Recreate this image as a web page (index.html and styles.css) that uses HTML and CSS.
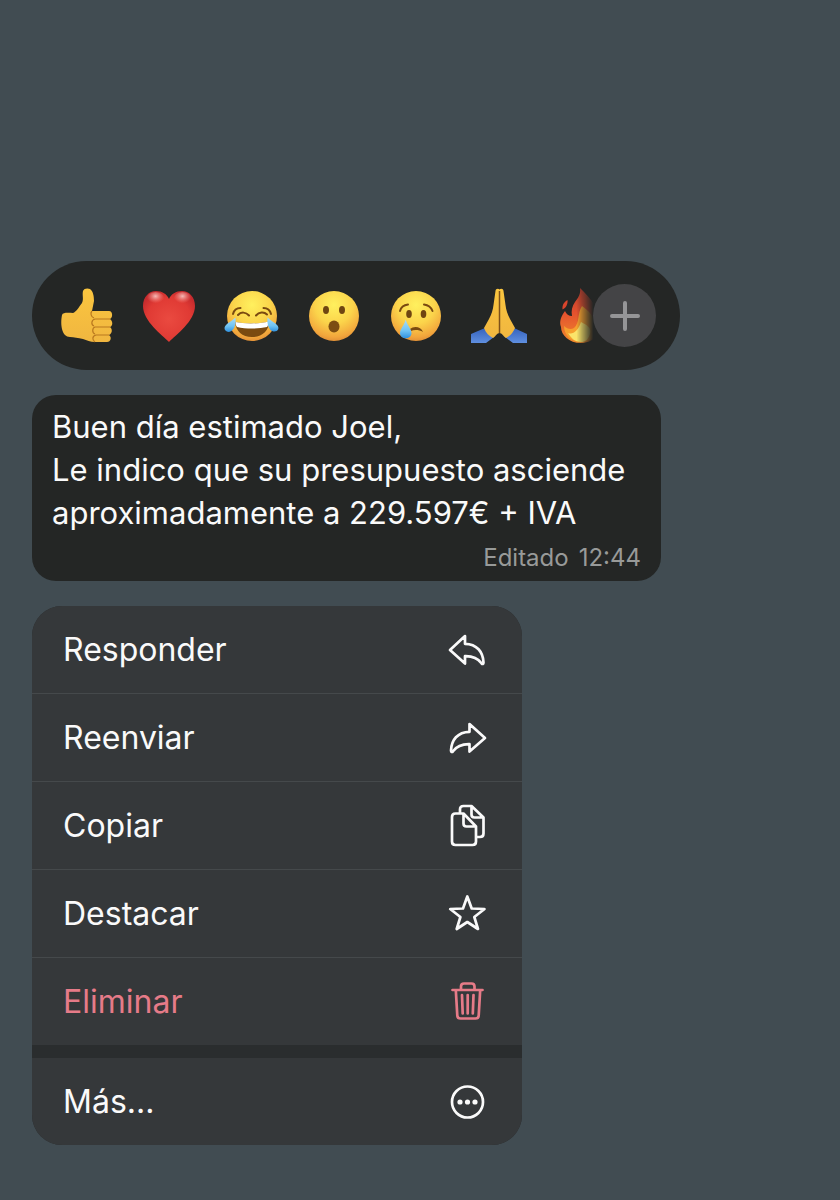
FILE: index.html
```html
<!DOCTYPE html>
<html lang="es">
<head>
    <meta charset="UTF-8">
    <meta name="viewport" content="width=device-width, initial-scale=1.0">
    <title>Mensaje</title>
    <link rel="stylesheet" href="styles.css">
</head>
<body>
    <svg class="defs" aria-hidden="true">
        <defs>
            <radialGradient id="face" cx="50%" cy="28%" r="75%">
                <stop offset="0" stop-color="#fff05e"/>
                <stop offset="0.5" stop-color="#fbd44b"/>
                <stop offset="0.85" stop-color="#f2a63c"/>
                <stop offset="1" stop-color="#dd8a35"/>
            </radialGradient>
            <linearGradient id="skin" x1="0" y1="0" x2="0" y2="1">
                <stop offset="0" stop-color="#fbc63f"/>
                <stop offset="1" stop-color="#f0b640"/>
            </linearGradient>
            <radialGradient id="heart" cx="50%" cy="55%" r="60%">
                <stop offset="0" stop-color="#ea4a40"/>
                <stop offset="0.7" stop-color="#e03a34"/>
                <stop offset="1" stop-color="#c42a2d"/>
            </radialGradient>
            <radialGradient id="shine" cx="50%" cy="30%" r="50%">
                <stop offset="0" stop-color="#ffdcd8" stop-opacity="0.8"/>
                <stop offset="1" stop-color="#ff9a92" stop-opacity="0"/>
            </radialGradient>
            <linearGradient id="tear" x1="0" y1="0" x2="0" y2="1">
                <stop offset="0" stop-color="#a9ddf8"/>
                <stop offset="0.6" stop-color="#6fc3f3"/>
                <stop offset="1" stop-color="#2f90de"/>
            </linearGradient>
            <linearGradient id="cuff" x1="0" y1="0" x2="0" y2="1">
                <stop offset="0" stop-color="#3562bd"/>
                <stop offset="1" stop-color="#5f8fe0"/>
            </linearGradient>
            <linearGradient id="flame" x1="0" y1="0" x2="0" y2="1">
                <stop offset="0" stop-color="#b53b2c"/>
                <stop offset="0.45" stop-color="#e4512e"/>
                <stop offset="1" stop-color="#f08a2c"/>
            </linearGradient>
        </defs>
    </svg>

    <main class="screen">
        <div class="reactions">
            <div class="emojis">
                <button class="emoji" aria-label="Me gusta">
                    <svg viewBox="0 0 56 56">
                        <path fill="url(#skin)" d="M3 27C4 24 10 25 14 25C17 24 20 19 23 15C25 11 23 7 24 3C25 0 29 0 31 1C34 3 35 8 35 13L33 23L50 23C54 23 54 30 51 31C54 33 54 38 51 39C54 41 53 46 50 47C53 49 52 54 48 54L36 54C31 54 28 52 24 51C19 50 15 49 11 49C3 49 1 37 3 27Z"/>
                        <path class="crease" d="M33 23C31 25 32 29 35 30M51 31H36C32 32 32 37 35 38M51 39H36C33 40 33 45 36 46M50 47H37C33 48 33 52 36 54"/>
                    </svg>
                </button>
                <button class="emoji" aria-label="Me encanta">
                    <svg viewBox="0 0 56 56">
                        <path fill="url(#heart)" d="M28 54C21 47 2 33 2 18C2 9 8 3 15 3C21 3 26 6 28 11C30 6 35 3 41 3C48 3 54 9 54 18C54 33 35 47 28 54Z"/>
                        <ellipse cx="14.500" cy="11" rx="9" ry="7" fill="url(#shine)"/>
                        <ellipse cx="41.500" cy="11" rx="9" ry="7" fill="url(#shine)"/>
                    </svg>
                </button>
                <button class="emoji" aria-label="Me divierte">
                    <svg viewBox="0 0 56 56">
                        <circle cx="28" cy="28" r="25" fill="url(#face)"/>
                        <path class="line" d="M9 26C10 22 13 20 16.500 20M39.500 20C43 20 46 22 47 26M14 27C17 23.500 22 24 25 27.500M32 27.500C35 24 40 23.500 43 26.500"/>
                        <path fill="#7a4a10" d="M11 34C20 36 36 36 45 33.500C45 43 38 49 28 49C18 49 12 43 11 34Z"/>
                        <path fill="#fff" d="M11.500 34C20 36 36 36 44.500 33.500C44.500 36 44 38 43 39C34 41 22 41 13 39C12 38 11.500 36 11.500 34Z"/>
                        <path fill="url(#tear)" d="M11.500 29.500C12 35 11 43 5 44C1 44 -1 40 2 37C4 34.500 8 33 11.500 29.500Z"/>
                        <path fill="url(#tear)" d="M43.500 29.500C43 35 44 42 49.500 43.500C54 44 56 40 53 37C51 34.500 47 33 43.500 29.500Z"/>
                    </svg>
                </button>
                <button class="emoji" aria-label="Me asombra">
                    <svg viewBox="0 0 56 56">
                        <circle cx="28" cy="28" r="25" fill="url(#face)"/>
                        <ellipse cx="20" cy="22" rx="3" ry="4" fill="#6f4511"/>
                        <ellipse cx="36" cy="22" rx="3" ry="4" fill="#6f4511"/>
                        <ellipse cx="28" cy="38.500" rx="5.500" ry="6" fill="#7c4d12"/>
                    </svg>
                </button>
                <button class="emoji" aria-label="Me entristece">
                    <svg viewBox="0 0 56 56">
                        <circle cx="28" cy="28" r="25" fill="url(#face)"/>
                        <path class="line" d="M12 23C13 19 16 17 20 16.500M36 16.500C40 17 43 19 44.500 23"/>
                        <ellipse cx="21" cy="26" rx="2.800" ry="4" fill="#6f4511"/>
                        <ellipse cx="35.500" cy="26" rx="2.800" ry="4" fill="#6f4511"/>
                        <path fill="#7a4a10" d="M22 41C26 37.500 33 38.500 35 44C31 41.500 26 41.500 23 43Z"/>
                        <path fill="url(#tear)" d="M17.700 31.500C19 37 23.500 41 23.500 45C23.500 52 12 52 12 45C12 41 16.500 37 17.700 31.500Z"/>
                    </svg>
                </button>
                <button class="emoji" aria-label="Gracias">
                    <svg viewBox="0 0 56 56">
                        <path fill="url(#cuff)" d="M0 46L14 40L23 49L15 55H0ZM56 46L43 40L34 49L42 55H56Z"/>
                        <path fill="url(#skin)" d="M28.500 1.500C27 0 24.500 1 24.500 3L22.500 17C22 22 20.500 26 18 31L13 40C15 45 18 48 22 50C25 48 26 45 28.500 45C31 45 32 48 35 50C39 48 42 45 44 40L39 31C36.500 26 35 22 34.500 17L32.500 3C32.500 1 30 0 28.500 1.500Z"/>
                        <path fill="none" stroke="#7d501a" stroke-width="1.500" d="M28.500 3V45"/>
                    </svg>
                </button>
                <button class="emoji emoji-faded" aria-label="Fuego">
                    <svg viewBox="0 0 56 56">
                        <path fill="#d9452c" d="M14.500 12C15 16 13 20 9.500 21.500C9 17 11 14 14.500 12Z"/>
                        <path fill="url(#flame)" d="M27 0C28 6 25 10 22 14C19 18 18 23 19 28C16 28 13 26 12 23C8 28 6 34 8 39C8 47 16 55 28 55C40 55 48 46 48 36C48 24 38 10 27 0Z"/>
                        <path fill="#f6a02e" d="M11 38C14 41 18 42 21 40C27 35 24 26 29 18C35 22 43 30 43 40C43 49 36 54 28 54C18 54 11 47 11 38Z"/>
                        <path fill="#fbe46a" d="M15 45C20 47 25 43 28 34C34 37 39 40 37 46C35 52 32 54 28 54C22 54 18 50 15 45Z"/>
                    </svg>
                </button>
            </div>
            <button class="add" aria-label="Más reacciones">
                <svg viewBox="0 0 32 32"><path d="M16 3V29M3 16H29"/></svg>
            </button>
        </div>

        <article class="message">
            <p class="text">Buen día estimado Joel,<br>Le indico que su presupuesto asciende aproximadamente a 229.597€ + IVA</p>
            <p class="meta"><span>Editado</span><time>12:44</time></p>
        </article>

        <div class="menu">
            <div class="group">
                <button class="item">
                    Responder
                    <svg class="icon" viewBox="0 -2 40 44"><path d="M18 6L3 20L18 33.500V26.200C26 26 31 28.500 34.500 33.300C35.500 34.500 36.500 34 36.500 32.500C36 22 30 14 18 13.800Z"/></svg>
                </button>
                <button class="item">
                    Reenviar
                    <svg class="icon" viewBox="0 -2 40 44"><path d="M22.500 6L38 20L22.500 33.500V26.200C14.500 26 9.500 28.500 6 33.300C5 34.500 4 34 4 32.500C4.500 22 10.500 14 22.500 13.800Z"/></svg>
                </button>
                <button class="item">
                    Copiar
                    <svg class="icon" viewBox="0 -2 40 44"><path d="M13 7.500V3.500Q13 0 16.500 0H24.500L36.500 11.500V27.500Q36.500 31 33 31H29M24.500 0V8.500Q24.500 11.500 27.500 11.500H36.500M8.500 7.500H16.500L29 20.500V35.500Q29 39 25.500 39H8.500Q5 39 5 35.500V11Q5 7.500 8.500 7.500ZM16.500 7.500V17.500Q16.500 20.500 19.500 20.500H29"/></svg>
                </button>
                <button class="item">
                    Destacar
                    <svg class="icon" viewBox="0 -2 40 44"><path d="M20.300 2.500L24.700 14.500L37.500 15L27.300 23L31 35L20.300 28L9.700 35L13.400 23L3.200 15L16 14.500Z"/></svg>
                </button>
                <button class="item danger">
                    Eliminar
                    <svg class="icon" viewBox="0 -2 40 44"><path d="M5.500 8H35.500M14 8V4.500Q14 1.500 17 1.500H24.500Q27.500 1.500 27.500 4.500V8M8.800 8L10.300 33.500Q10.500 36.500 13.500 36.500H28.500Q31.500 36.500 31.700 33.500L33.200 8M15 13L15.700 31.500M20.700 13V31.500M26.500 13L25.800 31.500"/></svg>
                </button>
            </div>
            <div class="group">
                <button class="item">
                    Más...
                    <svg class="icon" viewBox="0 -2 40 44">
                        <circle cx="20.500" cy="20" r="15.500"/>
                        <g class="dots"><circle cx="13" cy="20" r="2.600"/><circle cx="20.500" cy="20" r="2.600"/><circle cx="28" cy="20" r="2.600"/></g>
                    </svg>
                </button>
            </div>
        </div>
    </main>
</body>
</html>
```
FILE: styles.css
```css
* {
    box-sizing: border-box;
}
body {
    margin: 0;
    min-height: 100vh;
    background-color: #414c52;
    color: #fafafa;
    font-family: Inter, "Liberation Sans", sans-serif;
    font-size: 32px;
}
button {
    border: 0;
    padding: 0;
    background: none;
    color: inherit;
    font: inherit;
    cursor: pointer;
}
.defs {
    position: absolute;
    width: 0;
    height: 0;
}
.screen {
    display: flex;
    flex-direction: column;
    gap: 25px;
    padding: 261px 32px 55px;
}

/* Reactions */
.reactions {
    display: flex;
    align-items: center;
    width: 100%;
    max-width: 648px;
    height: 109px;
    padding: 0 24px 0 27px;
    border-radius: 55px;
    background: #242625;
}
.emojis {
    display: flex;
    flex: 1;
    justify-content: space-between;
    margin-right: -16px;
}
.emoji {
    width: 56px;
    height: 56px;
}
.emoji svg {
    display: block;
    width: 100%;
    height: 100%;
    overflow: visible;
}
.emoji-faded {
    -webkit-mask-image: linear-gradient(to right, #000 42%, transparent 72%);
    mask-image: linear-gradient(to right, #000 42%, transparent 72%);
}
.crease {
    fill: none;
    stroke: #b9781f;
    stroke-width: 1.2;
}
.line {
    fill: none;
    stroke: #7a4a10;
    stroke-width: 2;
    stroke-linecap: round;
}
.add {
    display: flex;
    align-items: center;
    justify-content: center;
    position: relative;
    width: 63px;
    height: 63px;
    border-radius: 50%;
    background: #444446;
}
.add svg {
    width: 32px;
    height: 32px;
    fill: none;
    stroke: #959597;
    stroke-width: 4;
    stroke-linecap: round;
}

/* Message */
.message {
    width: 100%;
    max-width: 629px;
    padding: 10px 20px 8px;
    border-radius: 24px;
    background: #242625;
}
.text {
    margin: 0;
    font-size: 31px;
    line-height: 43px;
}
.meta {
    display: flex;
    justify-content: flex-end;
    gap: 10px;
    margin: 9px 0 0;
    color: #989a99;
    font-size: 24px;
    line-height: 30px;
}

/* Menu */
.menu {
    display: flex;
    flex-direction: column;
    gap: 13px;
    width: 100%;
    max-width: 490px;
    border-radius: 30px;
    background: #2a2d2e;
    overflow: hidden;
}
.group {
    background: #35383a;
}
.item {
    display: flex;
    align-items: center;
    justify-content: space-between;
    width: 100%;
    height: 88px;
    padding: 0 35px 0 31px;
    border-bottom: 1px solid #45494b;
    text-align: left;
}
.item:last-child {
    height: 87px;
    border-bottom: 0;
}
.danger {
    color: #e67b88;
}
.icon {
    width: 40px;
    height: 44px;
    fill: none;
    stroke: currentColor;
    stroke-width: 2.7;
    stroke-linecap: round;
    stroke-linejoin: round;
}
.dots {
    fill: currentColor;
    stroke: none;
}
```
